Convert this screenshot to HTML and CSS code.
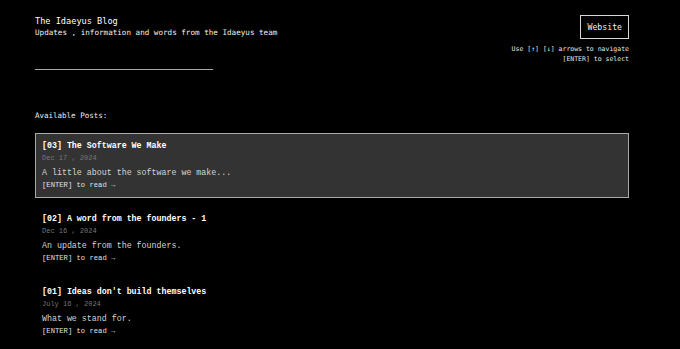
FILE: index.html
```html
<!DOCTYPE html>
<html lang="en">
<head>
    <meta charset="UTF-8">
    <meta name="viewport" content="width=device-width, initial-scale=1.0">
    <title>The Idaeyus Blog</title>
    <link rel="stylesheet" href="styles.css">
</head>
<body>
    <div class="page">
        <header class="header">
            <div class="brand">
                <div class="brand-title">The Idaeyus Blog</div>
                <div class="brand-sub">Updates , information and words from the Idaeyus team</div>
                <div class="rule"></div>
            </div>
            <div class="nav">
                <a href="#" class="site-btn">Website</a>
                <div class="hints">
                    <div>Use [&uarr;] [&darr;] arrows to navigate</div>
                    <div>[ENTER] to select</div>
                </div>
            </div>
        </header>

        <div class="section-label">Available Posts:</div>

        <div class="posts">
            <div class="post active">
                <div class="post-title">[03] The Software We Make</div>
                <div class="post-date">Dec 17 , 2024</div>
                <div class="post-desc">A little about the software we make...</div>
                <div class="post-read">[ENTER] to read &rarr;</div>
            </div>
            <div class="post">
                <div class="post-title">[02] A word from the founders - 1</div>
                <div class="post-date">Dec 16 , 2024</div>
                <div class="post-desc">An update from the founders.</div>
                <div class="post-read">[ENTER] to read &rarr;</div>
            </div>
            <div class="post">
                <div class="post-title">[01] Ideas don't build themselves</div>
                <div class="post-date">July 16 , 2024</div>
                <div class="post-desc">What we stand for.</div>
                <div class="post-read">[ENTER] to read &rarr;</div>
            </div>
        </div>
    </div>
</body>
</html>
```

FILE: styles.css
```css
* {
    margin: 0;
    padding: 0;
    box-sizing: border-box;
}

body {
    background: #000;
    color: #eee;
    font-family: 'DejaVu Sans Mono', monospace;
}

.page {
    width: 594px;
    margin-left: 35px;
    padding-top: 15px;
}

.header {
    display: flex;
    justify-content: space-between;
    align-items: flex-start;
}

.brand-title {
    font-size: 8.6px;
    line-height: 12px;
    color: #fff;
}

.brand-sub {
    font-size: 7.6px;
    line-height: 12px;
    color: #f2f2f2;
}

.rule {
    width: 178px;
    height: 1px;
    background: #a8a8a8;
    margin-top: 30px;
}

.nav {
    display: flex;
    flex-direction: column;
    align-items: flex-end;
}

.site-btn {
    display: block;
    height: 24px;
    padding: 0 6px;
    border: 1px solid #d8d8d8;
    color: #eee;
    text-decoration: none;
    font-size: 8.2px;
    line-height: 22px;
}

.hints {
    margin-top: 5px;
    text-align: right;
    font-size: 6.5px;
    line-height: 10px;
    color: #e8e8e8;
}

.section-label {
    margin-top: 40px;
    font-size: 7.5px;
    line-height: 12px;
    color: #eee;
}

.posts {
    margin-top: 11px;
    display: flex;
    flex-direction: column;
    gap: 8px;
}

.post {
    padding: 4.5px 6px;
    border: 1px solid transparent;
    font-family: 'Liberation Mono', monospace;
    line-height: 13.5px;
}

.post.active {
    background: #333;
    border-color: #aaa;
}

.post-title {
    font-size: 8.3px;
    font-weight: 700;
    color: #fff;
}

.post-date {
    font-size: 7px;
    color: #777;
}

.post-desc {
    font-size: 8.3px;
    color: #d4d4d4;
}

.post-read {
    font-size: 7.2px;
    color: #e0e0e0;
}
```
